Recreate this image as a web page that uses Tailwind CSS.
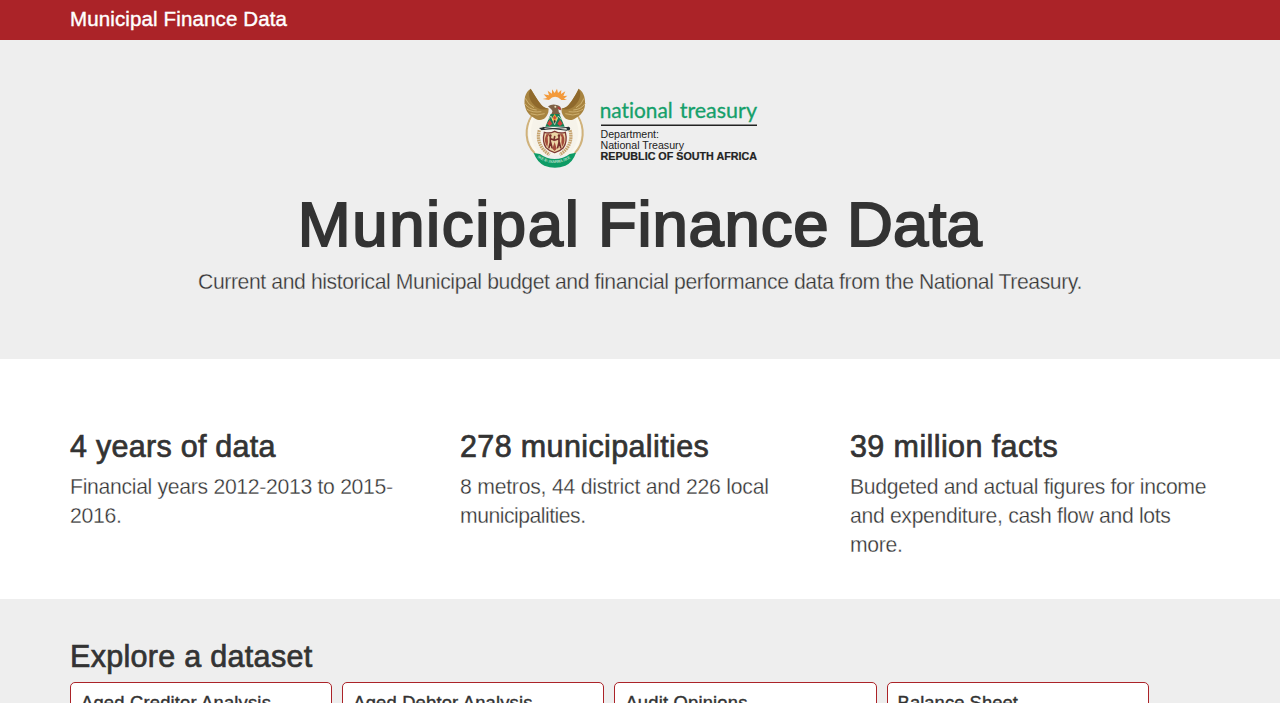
<!DOCTYPE html>
<html lang="en">
<head>
<meta charset="utf-8">
<title>Municipal Finance Data</title>
<script src="https://cdn.jsdelivr.net/npm/@tailwindcss/browser@4"></script>
</head>
<body class="h-[703px] overflow-hidden bg-white font-['Liberation_Sans',Arial,sans-serif] text-[#333]">
<header class="h-10 bg-[#ab2328] px-[70px]">
  <a class="block whitespace-nowrap text-[20.5px] leading-[38px] tracking-[0.13px] text-white [-webkit-text-stroke:0.4px_#fff]">Municipal Finance Data</a>
</header>

<section class="flex h-[319px] flex-col items-center bg-[#eee] pt-11">
  <svg class="h-[90px] w-[240px]" viewBox="520 84 240 90" role="img" aria-label="National Treasury, Republic of South Africa">
    <g transform="translate(515 80) scale(.33333)">
      <path d="M62 112C30 150 38 198 66 226H172C200 198 208 150 176 112Z" fill="#f6f3ea"/>
      <!-- rising sun -->
      <path d="M83 57 96 54 86 43 102 46 98 32 111 41 111 28 119 39 126 26 129 39 139 30 138 42 151 34 145 48 157 47 147 56 156 60 139 60Q120 40 102 60Z" fill="#f39a3c"/>
      <path d="M104 60Q120 43 138 60Z" fill="#eeeeee"/>
      <!-- ears of wheat and tusks -->
      <path d="M50 108C28 142 29 190 59 219M188 108C210 142 209 190 179 219" fill="none" stroke="#d0b27b" stroke-width="6"/>
      <path d="M56 109C37 145 40 187 70 222M182 109C201 145 198 187 168 222" fill="none" stroke="#fbf8ee" stroke-width="8"/>
      <path d="M73 151C65 178 75 207 104 224M165 151C173 178 163 207 134 224" fill="none" stroke="#c7a571" stroke-width="10" stroke-dasharray="5 2"/>
      <!-- wings -->
      <path d="M47 26C30 36 25 60 31 82C35 101 51 112 67 119C85 124 95 112 100 97L101 86C85 84 78 75 68 60C60 46 54 38 47 26Z" fill="#a88440"/>
      <path d="M191 26C208 36 213 60 209 82C205 101 189 112 173 119C155 124 145 112 140 97L139 86C155 84 162 75 172 60C180 46 186 38 191 26Z" fill="#a88440"/>
      <path d="M47 26C38 42 42 58 57 75C68 88 83 91 101 86C86 84 78 75 68 60C60 46 54 38 47 26Z" fill="#8f692c"/>
      <path d="M191 26C200 42 196 58 181 75C170 88 155 91 139 86C154 84 162 75 172 60C180 46 186 38 191 26Z" fill="#8f692c"/>
      <path d="M31 55Q40 75 57 83M29 70Q42 89 65 90M35 87Q52 99 79 95M47 101Q65 109 89 101M207 55Q200 75 183 83M211 70Q198 89 175 90M205 87Q188 99 161 95M193 101Q175 109 151 101" fill="none" stroke="#cfb170" stroke-width="3"/>
      <!-- bird head and breast -->
      <path d="M99 79Q112 70 128 76Q140 79 137 91L130 87Q129 96 137 103L107 104Q117 94 108 87Z" fill="#7d6045"/>
      <path d="M127 80Q139 79 137 91L130 87Z" fill="#b43a39"/>
      <circle cx="121" cy="80" r="3" fill="#eee0c2"/>
      <path d="M107 102H133L149 140H91Z" fill="#157e55"/>
      <path d="M119 102 128 116 119 130 110 116Z" fill="#e8ae36"/>
      <path d="M104 119 112 131 104 138 96 131ZM135 119 143 131 135 138 127 131Z" fill="#d4443b"/>
      <path d="M119 107 124 113 119 119 114 113Z" fill="#d4443b"/>
      <path d="M119 119 124 125 119 131 114 125Z" fill="#293931"/>
      <path d="M100 119 108 108 119 134 130 108 139 119" fill="none" stroke="#f5ead1" stroke-width="2"/>
      <!-- spear and knobkierie -->
      <path d="M79 149 161 142M83 142 157 151" stroke="#293335" stroke-width="3"/>
      <path d="M72 144 86 142 91 149 79 150Z" fill="#273133"/>
      <circle cx="160" cy="146" r="5.5" fill="#273133"/>
      <!-- shield -->
      <path d="M88 157Q104 162 119 154Q135 162 151 157Q158 184 145 203Q134 214 119 218Q103 214 93 203Q81 184 88 157Z" fill="#ecd5a5" stroke="#7d3734" stroke-width="4"/>
      <path d="M94 163 103 162 98 172 99 187 97 201Q84 185 94 163ZM144 163 135 162 140 172 139 187 141 201Q154 185 144 163ZM119 186 125 206 119 213 112 206Z" fill="#a44b3b"/>
      <g fill="none" stroke="#7a302c" stroke-width="5" stroke-linecap="round">
        <path d="M106 172V187L102 203M107 187 111 203M107 176 117 180 119 170M132 172V187L128 203M133 187 137 203M131 176 121 180"/>
      </g>
      <circle cx="106" cy="167" r="4" fill="#7a302c"/><circle cx="132" cy="167" r="4" fill="#7a302c"/>
      <!-- motto ribbon -->
      <path d="M56 219 75 222Q95 237 119 237Q145 237 164 222L183 218Q174 246 151 257Q120 269 88 257Q66 246 56 219Z" fill="#0e9b65"/>
      <path id="motto" d="M67 232Q118 267 173 231" fill="none"/>
      <text font-family="Liberation Sans,sans-serif" font-size="12" font-weight="700" fill="#bfe0cd"><textPath href="#motto" textLength="106">!KE E: /XARRA //KE</textPath></text>
    </g>
    <g class="[font-variant-ligatures:none]" font-family="Lato,sans-serif" font-size="20.5" fill="#15a06a" stroke="#15a06a" stroke-width=".3">
      <text x="599.7" y="118" textLength="73" lengthAdjust="spacingAndGlyphs">national</text>
      <text x="679.7" y="118" textLength="77.3" lengthAdjust="spacingAndGlyphs">treasury</text>
    </g>
    <path d="M601 125.2H757" stroke="#222" stroke-width="1.5"/>
    <g font-family="Liberation Sans,sans-serif" font-size="10.4" fill="#222">
      <text x="600.5" y="137.5" textLength="58.5" lengthAdjust="spacingAndGlyphs">Department:</text>
      <text x="600.5" y="149" textLength="83.5" lengthAdjust="spacingAndGlyphs">National Treasury</text>
      <text x="600.5" y="160" font-weight="700" textLength="156.5" lengthAdjust="spacingAndGlyphs" stroke="#222" stroke-width=".2">REPUBLIC OF SOUTH AFRICA</text>
    </g>
  </svg>
  <h1 class="mt-[15px] whitespace-nowrap text-[63.5px] leading-[70px] [-webkit-text-stroke:2px_#333]"><span class="tracking-[1.6px]">Municipal</span> <span class="tracking-[0.75px]">Finance</span> <span class="tracking-[0.3px]">Data</span></h1>
  <p class="mt-2 whitespace-nowrap text-[21.2px] leading-[30px] tracking-[-0.41px] [-webkit-text-stroke:0.3px_#eee]">Current and historical Municipal budget and financial performance data from the National Treasury.</p>
</section>

<section class="grid h-[240px] grid-cols-3 gap-[30px] px-[70px] pt-[70px]">
  <div>
    <h2 class="whitespace-nowrap text-[30.5px] leading-[34px] tracking-[0.27px] [-webkit-text-stroke:0.7px_#333]">4 years of data</h2>
    <p class="mt-[9px] whitespace-nowrap text-[21.2px] leading-[29px] tracking-[-0.31px] [-webkit-text-stroke:0.3px_#fff]">Financial years 2012-2013 to 2015-<br>2016.</p>
  </div>
  <div>
    <h2 class="whitespace-nowrap text-[30.5px] leading-[34px] tracking-[0.37px] [-webkit-text-stroke:0.7px_#333]">278 municipalities</h2>
    <p class="mt-[9px] whitespace-nowrap text-[21.2px] leading-[29px] tracking-[-0.23px] [-webkit-text-stroke:0.3px_#fff]">8 metros, 44 district and 226 local<br><span class="tracking-[-0.5px]">municipalities.</span></p>
  </div>
  <div>
    <h2 class="whitespace-nowrap text-[30.5px] leading-[34px] tracking-[0.4px] [-webkit-text-stroke:0.7px_#333]">39 million facts</h2>
    <p class="mt-[9px] whitespace-nowrap text-[21.2px] leading-[29px] tracking-[-0.33px] [-webkit-text-stroke:0.3px_#fff]">Budgeted and actual figures for income<br>and expenditure, cash flow and lots<br>more.</p>
  </div>
</section>

<section class="h-[104px] overflow-hidden bg-[#eee] px-[70px] pt-10">
  <h2 class="whitespace-nowrap text-[30.5px] leading-[34px] tracking-[0.3px] [-webkit-text-stroke:0.7px_#333]">Explore a dataset</h2>
  <div class="mt-[9px] grid w-[1078.8px] grid-cols-4 gap-[10px] whitespace-nowrap text-[18.4px] leading-5 tracking-[0.18px] [-webkit-text-stroke:0.4px_#333]">
    <a class="h-[110px] rounded-[5px] border border-[#ab2328] bg-white px-[10px] pt-[10px]">Aged Creditor Analysis</a>
    <a class="h-[110px] rounded-[5px] border border-[#ab2328] bg-white px-[10px] pt-[10px]">Aged Debtor Analysis</a>
    <a class="h-[110px] rounded-[5px] border border-[#ab2328] bg-white px-[10px] pt-[10px]">Audit Opinions</a>
    <a class="h-[110px] rounded-[5px] border border-[#ab2328] bg-white px-[10px] pt-[10px] tracking-[0.05px]">Balance Sheet</a>
  </div>
</section>
</body>
</html>
